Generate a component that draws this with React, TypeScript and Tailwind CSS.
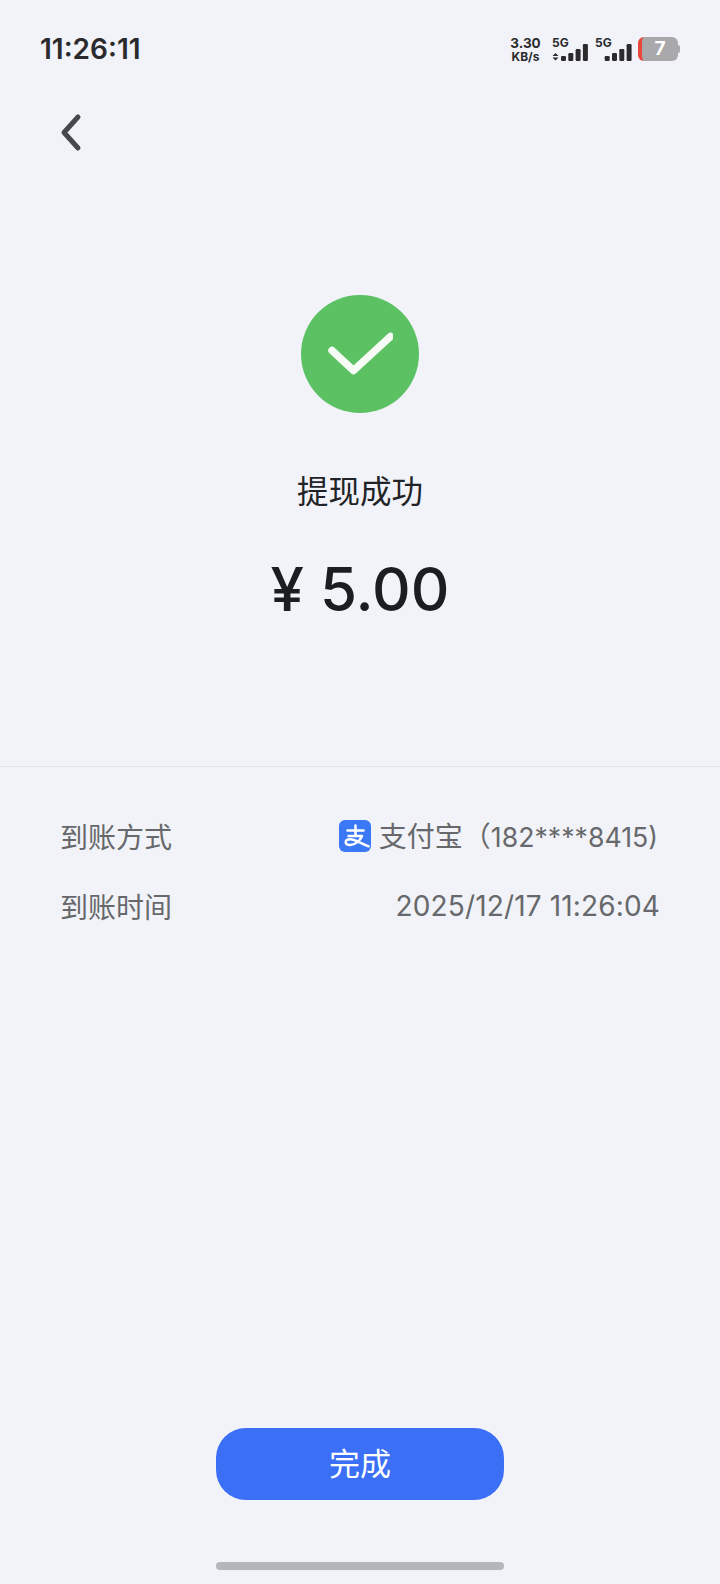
const cjk = { fontFamily: '"Noto Sans CJK SC", sans-serif' };
const inter = { fontFamily: 'Inter, sans-serif' };

function SignalBars({ x }: { x: number }) {
  return (
    <g fill="#2b2b2e">
      <rect x={x} y="18" width="5" height="5" rx="1.200" />
      <rect x={x + 7.300} y="15" width="5" height="8" rx="1.200" />
      <rect x={x + 14.600} y="11" width="5" height="12" rx="1.200" />
      <rect x={x + 21.900} y="6" width="5" height="17" rx="1.200" />
    </g>
  );
}

function StatusBar() {
  return (
    <div className="flex h-[88px] items-start justify-between px-[40px] pt-[32px]">
      <span className="text-[28px] leading-[34px] font-semibold text-[#2b2b2e]" style={inter}>
        11:26:11
      </span>
      <div className="flex items-center pt-[3px]">
        <div className="flex w-[31px] flex-col items-center pt-[2px] text-[13.500px] leading-[13px] font-bold text-[#2b2b2e]" style={inter}>
          <span>3.30</span>
          <span className="text-[12px]">KB/s</span>
        </div>
        <div className="relative ml-[11px] h-[28px] w-[38px]">
          <span className="absolute left-0 top-[-1px] text-[12px] font-bold text-[#2b2b2e]" style={inter}>5G</span>
          <svg className="absolute left-0 top-[3px]" width="38" height="25" viewBox="0 0 38 25">
            <path d="M3.500 15l3 3h-6zM3.500 22.500l3-3h-6z" fill="#2b2b2e" />
            <SignalBars x={9} />
          </svg>
        </div>
        <div className="relative ml-[5px] h-[28px] w-[38px]">
          <span className="absolute left-0 top-[-1px] text-[12px] font-bold text-[#2b2b2e]" style={inter}>5G</span>
          <svg className="absolute left-0 top-[3px]" width="38" height="25" viewBox="0 0 38 25">
            <SignalBars x={9.700} />
          </svg>
        </div>
        <div className="ml-[5px] flex items-center">
          <div className="flex h-[24px] w-[40px] items-center justify-center rounded-[6px] border-l-[4px] border-l-[#e8473d] bg-[#a9a9ab] text-[19px] font-bold text-white" style={inter}>
            7
          </div>
          <div className="h-[8px] w-[2px] rounded-r-[2px] bg-[#a9a9ab]" />
        </div>
      </div>
    </div>
  );
}

function AlipayIcon() {
  return (
    <svg width="32" height="32" viewBox="0 0 32 32" fill="none">
      <rect width="32" height="32" rx="6" fill="#3b78f5" />
      <path d="M8.500 10.500h16M16.500 5.500V16M9.500 16H23c-2 5-7.500 9-11.500 9-3.200 0-4.800-1-4.800-2.700 0-2 2-3 4.500-3 5 0 10 4.200 18.300 7" stroke="#fff" strokeWidth="2.500" strokeLinecap="round" strokeLinejoin="round" />
    </svg>
  );
}

export default function App() {
  return (
    <div className="flex h-[1584px] w-[720px] flex-col bg-[#f1f3f8]" style={cjk}>
      <StatusBar />

      {/* Back */}
      <div className="h-[64px] pl-[60px] pt-[25px]">
        <svg width="24" height="40" viewBox="0 0 24 40" fill="none">
          <path d="M18 4L4 19.500 18 35" stroke="#47484b" strokeWidth="5" strokeLinecap="round" strokeLinejoin="round" />
        </svg>
      </div>

      {/* Result */}
      <div className="flex h-[615px] flex-col items-center border-b border-[#e3e5ea] pt-[143px]">
        <div className="flex h-[118px] w-[118px] items-center justify-center rounded-full bg-[#5cc163]">
          <svg width="66" height="46" viewBox="0 0 66 46" fill="none">
            <path d="M5 19.500l21.500 20L63.500 5.500" stroke="#f6fbf6" strokeWidth="7.500" strokeLinecap="round" strokeLinejoin="round" />
          </svg>
        </div>
        <div className="mt-[54px] text-[31.500px] leading-[44px] text-[#222326]">提现成功</div>
        <div className="mt-[40px] text-[60px] leading-[76px] font-medium text-[#1c1d20]" style={{ fontFamily: 'Inter, "Noto Sans CJK SC", sans-serif' }}>
          ¥ 5.00
        </div>
      </div>

      {/* Details */}
      <div className="flex flex-col gap-[29px] px-[60px] pt-[47px] text-[28px] leading-[40px] text-[#67686b]">
        <div className="flex items-center justify-between">
          <span>到账方式</span>
          <div className="mr-[2px] flex items-center gap-[8px]">
            <AlipayIcon />
            <span className="pt-[1px]">支付宝（<span className="text-[26.700px]" style={inter}>182****8415)</span></span>
          </div>
        </div>
        <div className="flex items-center justify-between">
          <span>到账时间</span>
          <span className="tracking-[0.15px]" style={inter}>2025/12/17 11:26:04</span>
        </div>
      </div>

      {/* Footer */}
      <div className="mt-auto flex flex-col items-center pb-[14px]">
        <button className="h-[72px] w-[288px] rounded-[30px] bg-[#3b6ff6] pb-[3px] text-[31px] text-white">完成</button>
        <div className="mt-[62px] h-[8px] w-[288px] rounded-full bg-[#b5b6b9]" />
      </div>
    </div>
  );
}
